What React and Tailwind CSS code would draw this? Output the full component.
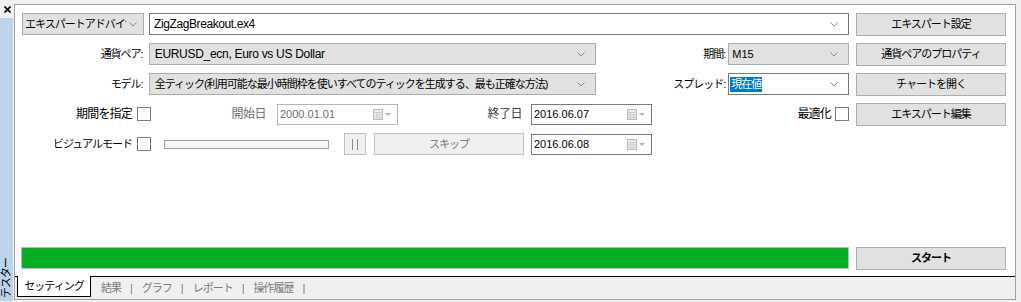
import React from "react";

const JP = "text-[11px] tracking-[-1px] leading-none whitespace-nowrap";

function Chevron() {
  return (
    <svg width="8" height="5" viewBox="0 0 8 5" className="shrink-0">
      <path d="M0.5 0.5 L4 4 L7.5 0.5" stroke="#8a8a8a" strokeWidth="1" fill="none" />
    </svg>
  );
}

function CalIcon() {
  return (
    <svg width="20" height="11" viewBox="0 0 20 11" className="shrink-0">
      <rect x="0.5" y="0.5" width="9" height="10" fill="#ececec" stroke="#b8b8b8" />
      <path d="M0.5 3.5 H9.5 M0.5 6 H9.5 M0.5 8.5 H9.5 M3.5 3.5 V10.5 M6.5 3.5 V10.5" stroke="#cdcdcd" />
      <path d="M12 4 L18 4 L15 7 Z" fill="#b4b4b4" />
    </svg>
  );
}

function Checkbox() {
  return <div className="w-[14px] h-[14px] shrink-0 border border-[#7a7a7a] bg-white" />;
}

function Button({ children, bold }) {
  return (
    <div className="w-[150px] h-[23px] shrink-0 flex items-center justify-center bg-[#e1e1e1] border border-[#adadad]">
      <span className={JP + (bold ? " font-bold" : "")}>{children}</span>
    </div>
  );
}

function DateBox({ value, disabled }) {
  return (
    <div
      className={
        "w-[121px] h-[21px] shrink-0 flex items-center justify-between bg-white border pl-[2px] pr-[4px] " +
        (disabled ? "border-[#b4b4b4] text-[#6d6d6d]" : "border-[#7a7a7a] text-black")
      }
    >
      <span className="text-[11px] leading-none">{value}</span>
      <CalIcon />
    </div>
  );
}

export default function App() {
  return (
    <div className="w-[1021px] h-[302px] bg-[#f0f0f0] flex overflow-hidden text-black text-[12px] font-['Liberation_Sans','Noto_Sans_CJK_JP',sans-serif]">
      {/* sidebar */}
      <div className="w-[14px] shrink-0 flex flex-col">
        <div className="h-[18px] pl-[4px] pt-[6px]">
          <svg width="7" height="7" viewBox="0 0 7 7">
            <path d="M0.5 0.5 L6.5 6.5 M6.5 0.5 L0.5 6.5" stroke="#000" strokeWidth="1.6" />
          </svg>
        </div>
        <div className="flex-1 w-[13px] bg-[#bcd3ea] flex flex-col justify-end items-center pb-[3px]">
          <span className="[writing-mode:vertical-rl] [text-orientation:sideways] rotate-180 text-[11px] tracking-[-1px] leading-none">
            テスター
          </span>
        </div>
        <div className="h-[1px]" />
      </div>

      {/* main */}
      <div className="w-[1002px] shrink-0 flex flex-col pt-[4px] pb-[2px]">
        <div className="flex-1 flex flex-col border border-[#a0a0a0]">
          <div className="flex-1 bg-white flex flex-col pl-[6px] pt-[8px] pb-[6px]">
            <div className="w-[985px] flex flex-col gap-[8px]">
              {/* row 1 */}
              <div className="h-[22px] flex items-center">
                <div className="ml-[1px] w-[122px] h-[22px] flex items-center bg-[#e1e1e1] border border-[#adadad] pl-[2px] pr-[6px] gap-[3px]">
                  <div className="w-[103px] overflow-hidden">
                    <span className={JP}>エキスパートアドバイザ</span>
                  </div>
                  <Chevron />
                </div>
                <div className="ml-[5px] w-[702px] h-[22px] flex items-center justify-between bg-white border border-[#7a7a7a] pl-[4px] pr-[10px]">
                  <span className="leading-none tracking-[-0.4px]">ZigZagBreakout.ex4</span>
                  <Chevron />
                </div>
                <div className="ml-[7px]">
                  <Button>エキスパート設定</Button>
                </div>
              </div>

              {/* row 2 */}
              <div className="h-[22px] flex items-center">
                <div className="w-[128px] text-right pr-[6px]">
                  <span className={JP}>通貨ペア:</span>
                </div>
                <div className="w-[448px] h-[22px] flex items-center justify-between bg-[#e1e1e1] border border-[#adadad] pl-[5px] pr-[10px]">
                  <span className="leading-none tracking-[-0.3px]">EURUSD_ecn, Euro vs US Dollar</span>
                  <Chevron />
                </div>
                <div className="w-[133px] text-right pr-[3px]">
                  <span className={JP}>期間:</span>
                </div>
                <div className="w-[121px] h-[22px] flex items-center justify-between bg-[#e1e1e1] border border-[#adadad] pl-[3px] pr-[10px]">
                  <span className="text-[11px] leading-none">M15</span>
                  <Chevron />
                </div>
                <div className="ml-[7px]">
                  <Button>通貨ペアのプロパティ</Button>
                </div>
              </div>

              {/* row 3 */}
              <div className="h-[22px] flex items-center">
                <div className="w-[128px] text-right pr-[6px]">
                  <span className={JP}>モデル:</span>
                </div>
                <div className="w-[448px] h-[22px] flex items-center justify-between bg-[#e1e1e1] border border-[#adadad] pl-[5px] pr-[10px]">
                  <span className={JP}>全ティック(利用可能な最小時間枠を使いすべてのティックを生成する、最も正確な方法)</span>
                  <Chevron />
                </div>
                <div className="w-[133px] text-right pr-[3px]">
                  <span className={JP}>スプレッド:</span>
                </div>
                <div className="w-[121px] h-[22px] flex items-center justify-between bg-white border border-[#7a7a7a] pl-[1px] pr-[10px]">
                  <span className={JP + " bg-[#0078d7] text-white py-[2px] px-[1px]"}>現在値</span>
                  <Chevron />
                </div>
                <div className="ml-[7px]">
                  <Button>チャートを開く</Button>
                </div>
              </div>

              {/* row 4 */}
              <div className="h-[22px] flex items-center">
                <div className="w-[130px] flex items-center justify-end gap-[5px]">
                  <span className="text-[12px] tracking-[-0.8px] leading-none whitespace-nowrap">期間を指定</span>
                  <Checkbox />
                </div>
                <div className="w-[126px] text-right pr-[11px] text-[#6d6d6d]">
                  <span className="text-[12px] tracking-[-0.5px] leading-none">開始日</span>
                </div>
                <DateBox value="2000.01.01" disabled />
                <div className="w-[133px] text-right pr-[9px] text-[#3a3a3a]">
                  <span className="text-[12px] tracking-[-0.5px] leading-none">終了日</span>
                </div>
                <DateBox value="2016.06.07" />
                <div className="flex-1 flex items-center justify-end gap-[4px] pr-[7px]">
                  <span className="text-[12px] tracking-[-0.8px] leading-none">最適化</span>
                  <Checkbox />
                </div>
                <Button>エキスパート編集</Button>
              </div>

              {/* row 5 */}
              <div className="h-[22px] flex items-center">
                <div className="w-[130px] flex items-center justify-end gap-[5px]">
                  <span className={JP}>ビジュアルモード</span>
                  <Checkbox />
                </div>
                <div className="ml-[13px] w-[165px] h-[9px] bg-[#f4f4f4] border border-[#a0a0a0]" />
                <div className="ml-[15px] w-[22px] h-[22px] flex items-center justify-center gap-[4px] bg-[#f0f0f0] border border-[#bfbfbf]">
                  <div className="w-[1px] h-[11px] bg-[#8a8a8a]" />
                  <div className="w-[1px] h-[11px] bg-[#8a8a8a]" />
                </div>
                <div className="ml-[8px] w-[150px] h-[22px] flex items-center justify-center bg-[#efefef] border border-[#bfbfbf] text-[#7a7a7a]">
                  <span className={JP}>スキップ</span>
                </div>
                <div className="ml-[7px]">
                  <DateBox value="2016.06.08" />
                </div>
              </div>
            </div>

            {/* progress row */}
            <div className="mt-auto w-[985px] h-[23px] flex items-start">
              <div className="w-[829px] h-[22px] bg-[#06b025] border border-[#bcbcbc]" />
              <div className="ml-[7px]">
                <Button bold>スタート</Button>
              </div>
            </div>
          </div>

          {/* tabs */}
          <div className="h-[23px] flex items-start">
            <div className="w-[2px] h-full border-t border-black" />
            <div className="w-[74px] h-[21px] bg-white border-l border-r border-b border-black flex items-center justify-center">
              <span className={JP}>セッティング</span>
            </div>
            <div className="flex-1 h-full border-t border-black flex items-center pl-[10px] text-[#7a7a7a]">
              <span className={JP}>結果</span>
              <span className="mx-[9px] text-[11px] leading-none">|</span>
              <span className={JP}>グラフ</span>
              <span className="mx-[9px] text-[11px] leading-none">|</span>
              <span className={JP}>レポート</span>
              <span className="mx-[9px] text-[11px] leading-none">|</span>
              <span className={JP}>操作履歴</span>
              <span className="mx-[9px] text-[11px] leading-none">|</span>
            </div>
          </div>
        </div>
      </div>
    </div>
  );
}
